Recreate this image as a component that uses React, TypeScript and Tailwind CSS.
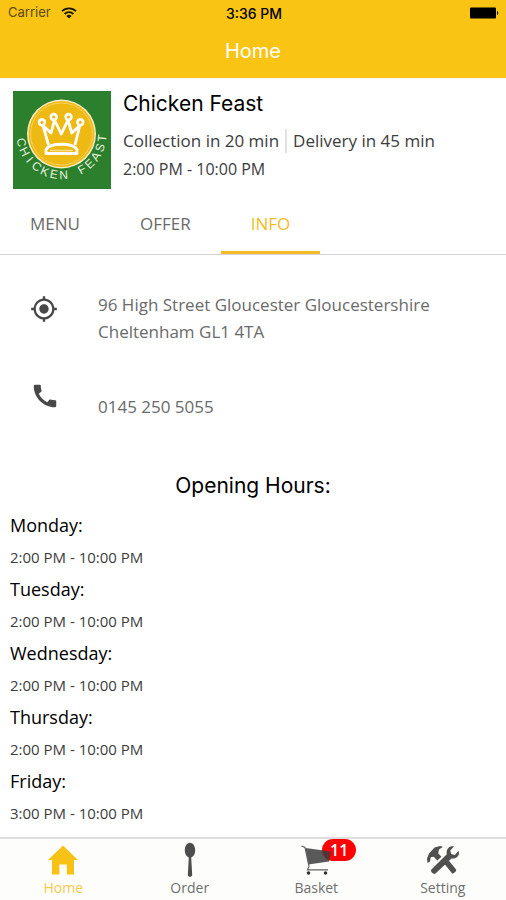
import type { ReactNode } from 'react';
import { MdCall, MdMyLocation } from 'react-icons/md';

interface OpeningHour {
  day: string;
  hours: string;
}

interface NavItemProps {
  label: string;
  icon: ReactNode;
  active?: boolean;
  badge?: number;
}

const TABS = ['MENU', 'OFFER', 'INFO'];
const ACTIVE_TAB = 'INFO';

const OPENING_HOURS: OpeningHour[] = [
  { day: 'Monday:', hours: '2:00 PM - 10:00 PM' },
  { day: 'Tuesday:', hours: '2:00 PM - 10:00 PM' },
  { day: 'Wednesday:', hours: '2:00 PM - 10:00 PM' },
  { day: 'Thursday:', hours: '2:00 PM - 10:00 PM' },
  { day: 'Friday:', hours: '3:00 PM - 10:00 PM' },
];

function WifiIcon() {
  return (
    <svg viewBox="0 0 16 12" className="h-3 w-4" fill="none" stroke="#1c1600" strokeWidth="1.8" aria-hidden="true">
      <path d="M1 4.2a10 10 0 0 1 14 0" />
      <path d="M3.6 7a6.3 6.3 0 0 1 8.8 0" />
      <path d="M8 11.6 5.4 9a3.8 3.8 0 0 1 5.2 0z" fill="#1c1600" stroke="none" />
    </svg>
  );
}

function BatteryIcon() {
  return (
    <svg viewBox="0 0 30 12" className="h-3 w-[30px]" aria-hidden="true">
      <rect x="0" y="0.5" width="26" height="11" rx="1" />
      <path d="M27 4c1.6.4 1.6 3.6 0 4z" />
    </svg>
  );
}

// Letters run round the lower half of the badge, one every 13.5 degrees
function Logo() {
  return (
    <svg viewBox="0 0 98 98" className="size-[98px] shrink-0" role="img" aria-label="Chicken Feast logo">
      <rect width="98" height="98" fill="#2c802d" />
      <circle cx="48.5" cy="43" r="34.5" fill="#f9ecc0" />
      <circle cx="48.5" cy="43" r="33" fill="#efb914" />
      <circle cx="48.5" cy="43" r="31" fill="none" stroke="#f6d878" strokeWidth="0.8" />
      <g fill="none" stroke="#fff" strokeWidth="2.8" strokeLinejoin="round">
        <path d="M35.5 54 30 34.5l8 7.5 3.5-13 6.8 14 6.7-14 3.8 13 8-7.5L62 54" />
        <path d="M33 62.5v-4C37 51.5 60 51.5 64 58.5v4z" />
        <path d="M37 59.5h23" stroke="#f8df8e" strokeWidth="1.5" />
      </g>
      <g fill="#efb914" stroke="#fff" strokeWidth="2.6">
        <circle cx="28.9" cy="31.3" r="2.9" />
        <circle cx="40.7" cy="26" r="2.9" />
        <circle cx="55.5" cy="26" r="2.9" />
        <circle cx="67.3" cy="31.3" r="2.9" />
      </g>
      <g
        fill="#e4f2df"
        fontFamily="Liberation Sans Narrow, Liberation Sans, sans-serif"
        fontSize="12"
        textAnchor="middle"
      >
        {'CHICKEN FEAST'.split('').map((letter, i) => (
          <text key={i} x="48.5" y="88" transform={`rotate(${78 - i * 13.5} 48.5 43)`}>
            {letter}
          </text>
        ))}
      </g>
    </svg>
  );
}

function HomeIcon() {
  return (
    <svg viewBox="0 0 32 32" className="size-8" fill="#f7c215" aria-hidden="true">
      <path d="M16 1.5 31 16h-4v14.5h-7.2V20.6h-7.4v9.9H5V16H1z" />
    </svg>
  );
}

function SpoonIcon() {
  return (
    <svg viewBox="0 0 12 36" className="h-9 w-3" aria-hidden="true">
      <path
        d="M6 .8c3.2 0 5.2 3.6 5.2 7.6 0 3.6-1.7 6.2-4 7.1L8.2 33c.1 2.4-4.5 2.4-4.4 0l1-17.5C2.5 14.6.8 12 .8 8.4.8 4.4 2.8.8 6 .8z"
        fill="#4d4d4d"
      />
    </svg>
  );
}

function CartIcon() {
  return (
    <svg viewBox="0 0 32 32" className="size-8" aria-hidden="true">
      <path d="M5.5 4 31 7.5 29 17.5 8.3 20.5z" fill="#3c3c3c" fillOpacity="0.85" />
      <path d="M1.5 2 5 3.5 9 22.5 7.5 25.8H28" fill="none" stroke="#606060" strokeWidth="1.2" />
      <circle cx="8.5" cy="29" r="1.8" fill="#333" />
      <circle cx="25.5" cy="29" r="1.8" fill="#333" />
    </svg>
  );
}

function ToolsIcon() {
  return (
    <svg viewBox="0 0 34 32" className="h-8 w-[34px]" fill="#505050" aria-hidden="true">
      <path d="M1.5 19 1 14.5 3 9.5 8.5 3.5 14 2l3 .8-4 2.7-.8 3.7 3.2 3.6-4 3.8-3.7-3.9-3 .6-.7 4.2z" />
      <path d="m17.5 18.8 4-3.8L30 25.5c1 1.3-2.5 4.8-4 3.8z" />
      <path d="M28 2.5 24.3 6.6l.9 3.4 3.4.9 4.1-4c1.4 4.3-2.2 8.7-7.2 7.5L9.5 29.5c-1.8 1.6-5.8-2-4.1-4L20.8 10.2C19.6 5.2 23.7 1.2 28 2.5z" />
    </svg>
  );
}

function NavItem({ label, icon, active, badge }: NavItemProps) {
  return (
    <a href="#" className="flex flex-1 flex-col items-center pt-[3px]">
      <span className="relative flex h-9 items-center">
        {badge !== undefined && (
          <span className="absolute -top-[3px] left-[22px] flex h-[22px] w-[34px] items-center justify-center rounded-full bg-[#fd0204] text-[16px] font-semibold text-white">
            {badge}
          </span>
        )}
        <span className="relative">{icon}</span>
      </span>
      <span className={active ? 'text-[14px] leading-5 text-[#f5c84a]' : 'text-[14px] leading-5 text-[#6e6e6e]'}>
        {label}
      </span>
    </a>
  );
}

export default function App() {
  return (
    <div className="flex min-h-screen flex-col bg-white font-['Open_Sans',sans-serif] text-[#3c3c3c]">
      <header className="h-[78px] bg-[#f9c414] font-['Inter',sans-serif]">
        <div className="grid h-[26px] grid-cols-3 items-center pr-[6px] pl-2 text-[13px]">
          <div className="flex items-center gap-[10px] text-[#5c4a10]">
            Carrier
            <WifiIcon />
          </div>
          <div className="text-center text-[14px] font-medium text-black">3:36 PM</div>
          <div className="flex justify-end">
            <BatteryIcon />
          </div>
        </div>
        <h1 className="text-center text-[20px] leading-[50px] text-white">Home</h1>
      </header>

      <main className="flex-1">
        <section className="flex gap-3 px-[13px] pt-[13px]">
          <Logo />
          <div>
            <h2 className="font-['Inter',sans-serif] text-[21px] leading-[26px] text-black">Chicken Feast</h2>
            <div className="mt-[10px] flex items-center text-[17px] leading-7">
              <span>Collection in 20 min</span>
              <span className="ml-[6px] h-6 border-l-2 border-[#e2e2e2] pl-[6px] leading-6">Delivery in 45 min</span>
            </div>
            <p className="text-[16px] leading-7">2:00 PM - 10:00 PM</p>
          </div>
        </section>

        <div role="tablist" className="mt-[6px] flex border-b border-[#d4d4d4]">
          {TABS.map((tab) => (
            <button
              key={tab}
              role="tab"
              aria-selected={tab === ACTIVE_TAB}
              className={
                tab === ACTIVE_TAB
                  ? 'h-[59px] border-b-[3px] border-[#f2bd24] px-[30px] pt-[2px] text-[17px] text-[#f2bd24]'
                  : 'h-[59px] border-b-[3px] border-transparent px-[30px] pt-[2px] text-[17px] text-[#6a6a6a]'
              }
            >
              {tab}
            </button>
          ))}
        </div>

        <address className="px-[30px] pt-9 text-[17px] leading-[27px] text-[#6a6a6a] not-italic">
          <div className="flex gap-10">
            <MdMyLocation className="mt-1 size-7 shrink-0 text-[#484848]" />
            <p>
              96 High Street Gloucester Gloucestershire
              <br />
              Cheltenham GL1 4TA
            </p>
          </div>
          <div className="mt-9 flex gap-[38px]">
            <MdCall className="size-[30px] shrink-0 text-[#484848]" />
            <p className="pt-3">0145 250 5055</p>
          </div>
        </address>

        <h2 className="mt-[50px] text-center font-['Inter',sans-serif] text-[21px] leading-8 text-black">
          Opening Hours:
        </h2>

        <dl className="px-[10px] pt-[7px]">
          {OPENING_HOURS.map((item) => (
            <div key={item.day}>
              <dt className="text-[18px] leading-8 font-medium text-black">{item.day}</dt>
              <dd className="text-[15px] leading-8">{item.hours}</dd>
            </div>
          ))}
        </dl>
      </main>

      <nav className="sticky bottom-0 flex h-[63px] border-t-2 border-[#dedede] bg-[#fdfefb]">
        <NavItem label="Home" icon={<HomeIcon />} active />
        <NavItem label="Order" icon={<SpoonIcon />} />
        <NavItem label="Basket" icon={<CartIcon />} badge={11} />
        <NavItem label="Setting" icon={<ToolsIcon />} />
      </nav>
    </div>
  );
}
